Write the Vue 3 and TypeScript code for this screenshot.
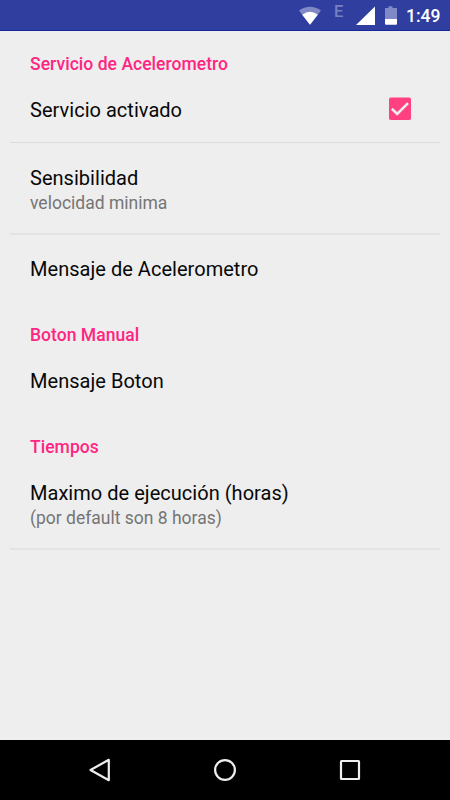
<script setup lang="ts">
interface Item { title: string; summary?: string; checked?: boolean; divider?: boolean }
interface Group { name: string; items: Item[] }
const groups: Group[] = [
  { name: 'Servicio de Acelerometro', items: [
    { title: 'Servicio activado', checked: true, divider: true },
    { title: 'Sensibilidad', summary: 'velocidad minima', divider: true },
    { title: 'Mensaje de Acelerometro' },
  ] },
  { name: 'Boton Manual', items: [{ title: 'Mensaje Boton' }] },
  { name: 'Tiempos', items: [{ title: 'Maximo de ejecución (horas)', summary: '(por default son 8 horas)', divider: true }] },
]
</script>

<template>
  <div class="screen">
    <header class="status">
      <svg class="icons" viewBox="0 0 104 31">
        <path d="M3 10.500Q14 3 25 10.500L14 24.700Z" fill="#8088c6" />
        <path d="M6.200 14.700Q14 8.800 21.800 14.700L14 24.700Z" fill="#fff" />
        <path d="M79 6.500V25H60Z" fill="#fff" />
        <path d="M89 8h3.500V6.300h4V8h4.500V19H89Z" fill="#8088c6" />
        <path d="M89 19H101V23.700Q101 24.700 100 24.700H90Q89 24.700 89 23.700Z" fill="#fff" />
      </svg>
      <span class="network">E</span>
      <span class="clock">1:49</span>
    </header>
    <main class="settings">
      <section v-for="group in groups" :key="group.name">
        <h2>{{ group.name }}</h2>
        <div v-for="item in group.items" :key="item.title" class="item" :class="{ double: item.summary, divider: item.divider, toggle: item.checked }">
          <div>
            <div class="title">{{ item.title }}</div>
            <div v-if="item.summary" class="summary">{{ item.summary }}</div>
          </div>
          <svg v-if="item.checked" class="check" viewBox="0 0 24 24"><rect x="1" y=".5" width="22" height="22.500" rx="1.800" fill="#ff4081" /><path d="M3.800 11.700L9.200 17L20 6.200" fill="none" stroke="#eee" stroke-width="2.600" /></svg>
        </div>
      </section>
    </main>
    <nav class="navbar">
      <svg viewBox="0 0 24 24"><path d="M20.800 1.800V22.200L2.500 12Z" /></svg>
      <svg viewBox="0 0 24 24"><circle cx="12" cy="12" r="9.900" /></svg>
      <svg viewBox="0 0 24 24"><rect x="3" y="3" width="18" height="18" rx=".5" /></svg>
    </nav>
  </div>
</template>

<style scoped>
.screen { width: 450px; height: 800px; display: flex; flex-direction: column; background: #eee; font-family: Roboto, sans-serif; overflow: hidden; }
.status { position: relative; height: 31px; flex: none; background: #303f9f; border-bottom: 1px solid #14279a; color: #fff; display: flex; align-items: center; justify-content: flex-end; box-sizing: border-box; padding-right: 10px; }
.icons { width: 104px; height: 31px; flex: none; margin-right: 6px; }
.network { position: absolute; left: 334px; top: 3px; font-size: 16.500px; line-height: 18px; font-weight: 500; color: #7780c2; }
.clock { font-size: 17.500px; font-weight: 500; width: 34px; padding-top: 1px; white-space: nowrap; }
.settings { flex: 1; }
h2 { margin: 0; height: 46px; padding: 23px 30px 0; box-sizing: border-box; font-size: 17.500px; line-height: 22px; font-weight: 500; letter-spacing: .04px; color: #ff2580; }
section:first-child h2 { padding-top: 22px; }
.item { height: 66px; margin: 0 10px; padding: 2px 20px 0; box-sizing: border-box; display: flex; align-items: center; justify-content: space-between; }
.toggle { padding-top: 0; }
.double { height: 92px; padding-top: 3px; }
section:last-child .double { height: 91px; }
.divider { border-bottom: 1px solid #dcdcdc; }
.double.divider { border-bottom: 2px solid #e3e3e3; }
.title { font-size: 20px; line-height: 26px; letter-spacing: .03px; color: #080808; }
.summary { font-size: 17.500px; line-height: 24px; color: #757575; }
.check { width: 24px; height: 24px; margin: -1px 8px 0 0; }
.navbar { flex: none; height: 60px; background: #000; display: flex; align-items: center; justify-content: center; gap: 101px; }
.navbar svg { width: 24px; height: 24px; fill: none; stroke: #eee; stroke-width: 2.200; stroke-linejoin: round; }
</style>

<style>
body { margin: 0; }
</style>
